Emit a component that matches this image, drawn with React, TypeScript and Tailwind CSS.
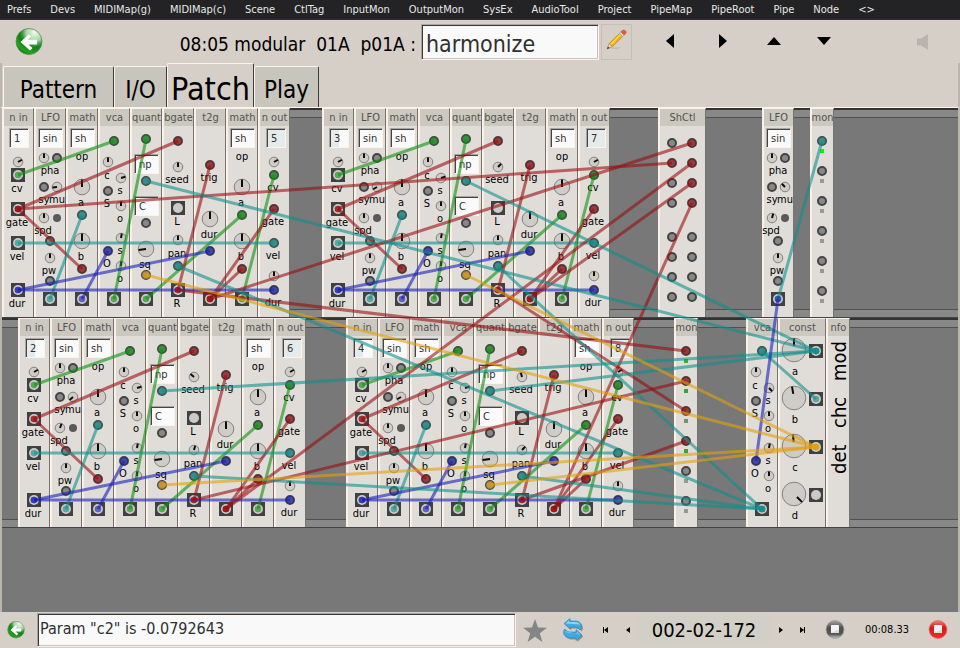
import { Fragment } from "react";

type Tint = "none" | "half" | "full";

type Part = {
  kind: "knob" | "port" | "jack" | "dot" | "led" | "field";
  x: number;
  y: number;
  size?: number;
  angle?: number;
  value?: string;
  tint?: Tint;
  color?: string;
  label?: string;
  lx?: number;
  ly?: number;
};

type ModuleData = { title: string; x: number; width: number; parts: Part[] };

const ROW = 210;
const MENUS = [
  "Prefs", "Devs", "MIDIMap(g)", "MIDIMap(c)", "Scene", "CtlTag", "InputMon", "OutputMon",
  "SysEx", "AudioTool", "Project", "PipeMap", "PipeRoot", "Pipe", "Node", "<>",
];

const knob = (x: number, y: number, size: number, angle = 0, label?: string, lx = x, ly = y + 13): Part => ({
  kind: "knob", x, y, size, angle, label, lx, ly,
});
const port = (x: number, y: number, label?: string, lx = x, ly = y + 12): Part => ({ kind: "port", x, y, label, lx, ly });
const jack = (x: number, y: number, label?: string, lx = x, ly = y + 13): Part => ({ kind: "jack", x, y, label, lx, ly });
const field = (x: number, y: number, size: number, value: string, tint: Tint = "none", label?: string, lx = 16, ly = 48): Part => ({
  kind: "field", x, y, size, value, tint, label, lx, ly,
});

const noteIn = (x: number, value: string, tint: Tint): ModuleData => ({
  title: "n in", x, width: 32,
  parts: [
    field(7, 20, 20, value, tint),
    knob(16, 54, 10, 60),
    jack(16, 67, "cv", 15, 80),
    jack(16, 101, "gate", 15, 114),
    jack(16, 135, "vel", 15, 148),
    jack(16, 182, "dur", 15, 195),
  ],
});
const noteOut = (x: number, value: string): ModuleData => ({
  title: "n out", x, width: 32,
  parts: [
    field(8, 20, 20, value, "full"),
    knob(16, 54, 10, 60),
    port(16, 67, "cv", 15, 79),
    port(16, 101, "gate", 15, 113),
    port(16, 135, "vel", 15, 147),
    knob(16, 168, 10),
    port(16, 182, "dur", 15, 194),
  ],
});
const lfo = (x: number, mu: number, spd: number): ModuleData => ({
  title: "LFO", x, width: 32,
  parts: [
    field(4, 20, 25, "sin"),
    knob(10, 50, 10, 0, "pha", 16, 62),
    port(23, 50),
    port(10, 79, "sy", 10, 91),
    knob(23, 79, 10, mu, "mu", 23, 91),
    knob(10, 110, 10, spd, "spd", 9, 122),
    { kind: "dot", x: 23, y: 110 },
    port(16, 133),
    knob(16, 150, 10, 0, "pw", 15, 162),
    port(16, 173),
    jack(16, 191),
  ],
});
const math = (x: number): ModuleData => ({
  title: "math", x, width: 32,
  parts: [
    field(4, 20, 25, "sh", "none", "op", 16, 48),
    knob(16, 79, 16, 0, "a", 15, 94),
    port(16, 107),
    knob(16, 133, 16, 0, "b", 15, 148),
    port(16, 161),
    jack(16, 191),
  ],
});
const vca = (x: number, c: number): ModuleData => ({
  title: "vca", x, width: 32,
  parts: [
    port(16, 33),
    knob(10, 54, 10, 0, "c", 9, 67),
    knob(23, 70, 10, c, "s", 22, 82),
    port(10, 83, "S", 9, 95),
    knob(23, 98, 10, 0, "o", 22, 110),
    knob(23, 130, 10, 10, "s", 22, 142),
    port(10, 143, "O", 9, 155),
    knob(23, 158, 10, 0, "o", 22, 170),
    jack(16, 191),
  ],
});
const quant = (x: number): ModuleData => ({
  title: "quant", x, width: 32,
  parts: [
    port(16, 31),
    field(4, 46, 25, "np"),
    port(16, 73),
    field(4, 88, 25, "C"),
    port(16, 115),
    knob(16, 141, 16, -98, "sq", 15, 156),
    port(16, 167),
    jack(16, 191),
  ],
});
const bgate = (x: number, seed: number, pan: number): ModuleData => ({
  title: "bgate", x, width: 32,
  parts: [
    port(16, 33),
    knob(16, 59, 10, seed, "seed", 15, 71),
    jack(16, 100, "L", 15, 113),
    knob(16, 132, 10, pan, "pan", 15, 145),
    port(16, 158),
    jack(16, 182, "R", 15, 195),
  ],
});
const t2g = (x: number): ModuleData => ({
  title: "t2g", x, width: 32,
  parts: [port(16, 57, "trig", 15, 69), knob(16, 111, 16, 0, "dur", 15, 126), port(16, 143), jack(16, 191)],
});
const monitor = (x: number, leds: string[]): ModuleData => ({
  title: "mon", x, width: 24,
  parts: leds.flatMap((color, i): Part[] => [
    port(12, 33 + i * 30),
    { kind: "led", x: 12, y: 43 + i * 30, color },
  ]),
});
const voice = (x: number, input: string, tint: Tint, output: string, mu: number, spd: number, seed: number, pan: number) => [
  noteIn(x, input, tint),
  lfo(x + 32, mu, spd),
  math(x + 64),
  vca(x + 96, 75),
  quant(x + 128),
  bgate(x + 160, seed, pan),
  t2g(x + 192),
  math(x + 224),
  noteOut(x + 256, output),
];

const OFF = "#999896";
const RACKS: ModuleData[][] = [
  [
    ...voice(0, "1", "none", "5", -95, 0, 0, 0),
    ...voice(320, "3", "half", "7", -120, 0, 45, 0),
    {
      title: "ShCtl", x: 656, width: 48,
      parts: [35, 55, 75, 95, 129, 149, 169, 189].flatMap((y) => [port(14, y), port(34, y)]),
    },
    lfo(760, -45, 15),
    monitor(808, ["#00f800", OFF, OFF, OFF, OFF, OFF]),
  ],
  [
    ...voice(16, "2", "half", "6", -130, 20, -50, 15),
    ...voice(344, "4", "half", "8", -120, 0, -15, 45),
    monitor(672, ["#22c022", "#3aa03a", "#6e956e", "#3aa53a", OFF, OFF]),
    vca(744, 135),
    {
      title: "const", x: 776, width: 48,
      parts: [
        knob(16, 32, 24, 0, "a", 17, 53),
        knob(16, 80, 24, -10, "b", 17, 101),
        knob(16, 128, 24, -5, "c", 17, 149),
        knob(16, 176, 24, 135, "d", 17, 197),
        jack(38, 33), jack(38, 81), jack(38, 129), jack(38, 177),
      ],
    },
    { title: "nfo", x: 824, width: 24, parts: [] },
  ],
];

type Cable = [color: string, x1: number, y1: number, x2: number, y2: number];
const RED = "#990f12";
const GREEN = "#109010";
const TEAL = "#108f8c";
const BLUE = "#1a20b8";
const GOLD = "#e3a00c";

const voiceCables = (x: number, y: number): Cable[] =>
  ([
    [GREEN, 16, 67, 112, 33],
    [GREEN, 112, 191, 144, 31],
    [GREEN, 144, 191, 240, 107],
    [GREEN, 240, 191, 272, 67],
    [RED, 16, 101, 176, 33],
    [RED, 16, 101, 80, 161],
    [RED, 176, 182, 208, 57],
    [RED, 208, 191, 272, 101],
    [RED, 208, 191, 240, 161],
    [TEAL, 16, 135, 272, 135],
    [TEAL, 48, 191, 80, 107],
    [BLUE, 16, 182, 272, 182],
    [BLUE, 16, 182, 208, 143],
    [BLUE, 80, 191, 106, 143],
  ] as Cable[]).map(([c, a, b, d, e]) => [c, a + x, b + y, d + x, e + y]);

const CABLES: Cable[] = [
  ...voiceCables(0, 0),
  ...voiceCables(320, 0),
  ...voiceCables(16, ROW),
  ...voiceCables(344, ROW),
  [RED, 16, 101, 670, 55],
  [RED, 208, 191, 690, 35],
  [RED, 176, 182, 684, 243],
  [RED, 496, 182, 684, 303],
  [RED, 528, 191, 690, 75],
  [RED, 224, 401, 690, 55],
  [RED, 552, 401, 690, 95],
  [RED, 192, 392, 684, 273],
  [RED, 520, 392, 684, 333],
  [TEAL, 814, 243, 144, 73],
  [TEAL, 814, 243, 464, 73],
  [TEAL, 814, 243, 160, 283],
  [TEAL, 814, 243, 488, 283],
  [TEAL, 760, 401, 176, 158],
  [TEAL, 760, 401, 496, 158],
  [TEAL, 760, 401, 192, 368],
  [TEAL, 760, 401, 520, 368],
  [TEAL, 814, 291, 760, 243],
  [TEAL, 776, 191, 820, 33],
  [BLUE, 776, 191, 754, 353],
  [GOLD, 814, 339, 144, 167],
  [GOLD, 814, 339, 464, 167],
  [GOLD, 814, 339, 160, 377],
  [GOLD, 814, 339, 488, 377],
];

function Knob({ part, id, name }: { part: Part; id: string; name: string }) {
  const size = part.size ?? 10;
  const r = size / 2;
  return (
    <span className="absolute" style={{ left: part.x - r, top: part.y - r, width: size, height: size }}>
      <svg viewBox={`0 0 ${size} ${size}`} className="block size-full overflow-visible">
        <circle cx={r} cy={r} r={r - 0.2} fill="#cfccc7" stroke="#85827e" />
        <line
          x1={r} y1={size > 20 ? r * 0.65 : r} x2={r} y2={0.5}
          stroke="#0c0c0c" strokeWidth="2" transform={`rotate(${part.angle ?? 0} ${r} ${r})`}
        />
      </svg>
      <input id={id} aria-label={name} type="range" min={-180} max={180} defaultValue={part.angle} className="absolute inset-0 size-full opacity-0" />
    </span>
  );
}

const TINTS: Record<Tint, string> = {
  none: "bg-[#fafafa]",
  half: "bg-[linear-gradient(90deg,#e4ebea_50%,#fafafa_50%)]",
  full: "bg-[#e4ebea]",
};

function Control({ part, id, name }: { part: Part; id: string; name: string }) {
  switch (part.kind) {
    case "knob":
      return <Knob part={part} id={id} name={name} />;
    case "port":
      return (
        <button
          id={id} aria-label={name}
          className="absolute size-[10px] rounded-full border-2 border-[#444444] bg-[#888888]"
          style={{ left: part.x - 5, top: part.y - 5 }}
        />
      );
    case "jack":
      return (
        <button
          id={id} aria-label={name}
          className="absolute flex size-[14px] items-center justify-center bg-[#404040]"
          style={{ left: part.x - 7, top: part.y - 7 }}
        >
          <span className="size-[10px] rounded-full bg-[#cbcac8]" />
        </button>
      );
    case "field":
      return (
        <input
          id={id} aria-label={name} defaultValue={part.value}
          className={`absolute h-5 border border-t-[#aaa5a0] border-r-[#fcf3ec] border-b-[#fcf3ec] border-l-[#aaa5a0] pl-1 text-[11px] leading-4 text-[#303030] shadow-[inset_1px_1px_0_#444] ${TINTS[part.tint ?? "none"]}`}
          style={{ left: part.x, top: part.y, width: part.size }}
        />
      );
    case "dot":
      return <span className="absolute size-2 rounded-full bg-[#5a5a5a]" style={{ left: part.x - 4, top: part.y - 4 }} />;
    default:
      return <span className="absolute size-1" style={{ left: part.x - 2, top: part.y - 2, background: part.color }} />;
  }
}

function Module({ data, rack }: { data: ModuleData; rack: number }) {
  return (
    <section
      className="absolute inset-y-0 mb-px border-t border-r border-l-2 border-t-[#faf0e8] border-r-[#77736f] border-l-[#faf0e8] bg-[#e0ddd8]"
      style={{ left: data.x, width: data.width }}
    >
      <h3 className="flex h-[17px] justify-center bg-[#cbc8c0] text-[11px] leading-[18px] whitespace-nowrap text-[#55524e]">
        {data.title}
      </h3>
      <div className="absolute -top-px -left-0.5">
        {data.parts.map((part, i) => {
          const id = `r${rack}-m${data.x}-p${i}`;
          return (
            <Fragment key={id}>
              <Control part={part} id={id} name={part.label ?? `${data.title} ${i + 1}`} />
              {part.label && (
                <label
                  htmlFor={id}
                  className="absolute h-4 w-10 text-center text-[11px] leading-4 text-black"
                  style={{ left: (part.lx ?? 0) - 20, top: (part.ly ?? 0) - 7 }}
                >
                  {part.label}
                </label>
              )}
            </Fragment>
          );
        })}
      </div>
      {data.title === "nfo" && (
        <p className="mt-[5px] flex h-[133px] w-full rotate-180 items-center justify-between text-[20px] leading-5 text-black [writing-mode:vertical-rl]">
          <span>det</span>
          <span>chc</span>
          <span>mod</span>
        </p>
      )}
    </section>
  );
}

function Cables() {
  return (
    <svg className="pointer-events-none absolute inset-0 size-full">
      {CABLES.map(([color, x1, y1, x2, y2], i) => (
        <g key={i} fill={color} stroke="none">
          <line x1={x1} y1={y1} x2={x2} y2={y2} stroke={color} strokeWidth="3" opacity="0.6" />
          <circle cx={x1} cy={y1} r="3.3" opacity="0.6" />
          <circle cx={x2} cy={y2} r="4" opacity="0.6" />
        </g>
      ))}
    </svg>
  );
}

function BackIcon({ className }: { className: string }) {
  return (
    <svg viewBox="0 0 28 28" className={className}>
      <defs>
        <radialGradient id="leaf" cx="0.72" cy="0.15" r="0.95">
          <stop offset="0" stopColor="#f0faee" />
          <stop offset="0.35" stopColor="#a5d3a2" />
          <stop offset="0.5" stopColor="#3f9a40" />
          <stop offset="0.62" stopColor="#167d1a" />
          <stop offset="0.85" stopColor="#1da81d" />
          <stop offset="1" stopColor="#0c5a10" />
        </radialGradient>
      </defs>
      <circle cx="14" cy="13.5" r="13" fill="url(#leaf)" stroke="#5a8a5c" strokeWidth="0.8" />
      <path d="M5.500 14 L13.500 6.500 L16 8.500 L12.800 11.800 L22 11.800 L22 16.500 L13.500 16.500 L17.500 20 L15 22.500 Z" fill="#fff" />
    </svg>
  );
}

function SquareIcon({ red }: { red?: boolean }) {
  return (
    <svg viewBox="0 0 20 20" className="size-5">
      <defs>
        <linearGradient id="ember" x1="0" y1="0" x2="0" y2="1">
          <stop offset="0" stopColor="#f08078" />
          <stop offset="0.4" stopColor="#d81818" />
          <stop offset="1" stopColor="#f03028" />
        </linearGradient>
        <linearGradient id="steel" x1="0" y1="0" x2="0" y2="1">
          <stop offset="0" stopColor="#a8a8a8" />
          <stop offset="0.4" stopColor="#505050" />
          <stop offset="0.75" stopColor="#555" />
          <stop offset="1" stopColor="#c8c8c8" />
        </linearGradient>
      </defs>
      <circle cx="10" cy="9.5" r="9" fill={red ? "url(#ember)" : "url(#steel)"} stroke={red ? "#d87070" : "#a0a0a0"} strokeWidth="0.8" />
      <rect x="6" y="5" width="8" height="8" rx="0.5" fill="#f4f4f4" />
      <path d="M6 13 L14 9 V13 Z" fill="#dcdcdc" />
    </svg>
  );
}

function Tri({ d, box, className, name }: { d: string; box: string; className: string; name: string }) {
  return (
    <button aria-label={name} className={`flex h-full items-center justify-center ${className}`}>
      <svg viewBox={`0 0 ${box}`} width={box.split(" ")[0]} height={box.split(" ")[1]}>
        <path d={d} fill="#000" />
      </svg>
    </button>
  );
}

const TABS = [
  { name: "Pattern", style: "mt-[3px] w-[111px] bg-[#c8c5bc] text-[24px]" },
  { name: "I/O", style: "mt-[3px] w-[53px] bg-[#c8c5bc] text-[24px]" },
  { name: "Patch", style: "w-[87px] bg-[#d5cfc8] text-[32px]" },
  { name: "Play", style: "mt-[3px] w-[65px] bg-[#c8c5bc] text-[24px]" },
];

const INSET = "border border-t-[#aaa5a0] border-r-[#fcf3ec] border-b-[#fcf3ec] border-l-[#aaa5a0] bg-[#f9f9f9] text-[#303030] shadow-[inset_1px_1px_0_#383838,inset_-1px_-1px_0_#c8c3bc]";

export default function App() {
  return (
    <div className="flex h-screen flex-col overflow-hidden bg-[#d5cfc8] font-['DejaVu_Sans_Condensed','DejaVu_Sans',sans-serif] text-black">
      <nav className="flex h-5 shrink-0 items-center gap-[19px] border-b border-[#3a3034] bg-[#232325] px-[7px] pt-[2px] text-[11px] whitespace-nowrap text-[#e8e8e8]">
        {MENUS.map((m) => (
          <button key={m}>{m}</button>
        ))}
      </nav>

      <header className="flex h-[43px] shrink-0 items-center">
        <button aria-label="Back" className="ml-[15px]">
          <BackIcon className="size-7" />
        </button>
        <label htmlFor="name" className="w-[373px] pt-1 text-right text-[19px] leading-6 whitespace-pre">
          08:05 modular  01A  p01A :
        </label>
        <input id="name" defaultValue="harmonize" className={`ml-[5px] h-9 w-[178px] px-1 pt-1 text-[23px] ${INSET}`} />
        <button aria-label="Edit" className="ml-[2px] flex h-9 w-[31px] items-center justify-center border border-[#c5bfb8]">
          <svg viewBox="0 0 24 24" className="mb-1 size-6">
            <path d="M3 20 L12 21.5 L16 19 Z" fill="#b8b2aa" opacity="0.6" />
            <path d="M2 21 L4.2 15.600 L7.400 18.7 Z" fill="#ecd8b0" stroke="#8a6a4a" strokeWidth="0.5" />
            <path d="M2 21 L3 18.5 L4.6 20 Z" fill="#333" />
            <path d="M4.2 15.600 L14.5 5.300 L17.700 8.4 L7.400 18.7 Z" fill="#f5a81c" stroke="#a8701c" strokeWidth="0.5" />
            <path d="M5.3 15.9 L15 6.200 L16 7.200 L6.3 16.9 Z" fill="#ffe24a" />
            <path d="M14.5 5.300 L16 3.800 L19.200 7 L17.700 8.4 Z" fill="#d8dce4" stroke="#8a8e96" strokeWidth="0.5" />
            <path d="M16 3.800 C18 1.6 19.5 1.800 20.6 3 C21.8 4.3 21.300 5.2 19.200 7 Z" fill="#ec5a30" stroke="#c03c20" strokeWidth="0.5" />
          </svg>
        </button>
        <div className="ml-[11px] flex h-9 -translate-y-px">
          <Tri name="Previous" className="w-[54px]" box="8 14" d="M8 0 V14 L0 7 Z" />
          <Tri name="Next" className="w-[52px]" box="8 14" d="M0 0 V14 L8 7 Z" />
          <Tri name="Up" className="w-[50px]" box="14 8" d="M0 8 H14 L7 0 Z" />
          <Tri name="Down" className="w-[50px]" box="14 8" d="M0 0 H14 L7 8 Z" />
        </div>
        <button aria-label="Sound" className="mr-8 ml-auto">
          <svg viewBox="0 0 11 16" className="h-4 w-[11px]">
            <path d="M0 4.5 H4 L11 0 V16 L4 11.5 H0 Z" fill="#b9b4ae" />
          </svg>
        </button>
      </header>

      <div role="tablist" className="flex h-11 shrink-0 border-x-2 border-[#bab5ae] pl-px">
        {TABS.map((t) => (
          <button
            key={t.name} role="tab" aria-selected={t.name === "Patch"}
            className={`rounded-t-[2px] border-t border-r border-l border-t-[#fcf3ec] border-r-[#3c3c3c] border-l-[#fcf3ec] pt-[6px] leading-8 ${t.style}`}
          >
            {t.name}
          </button>
        ))}
      </div>

      <main className="relative min-h-0 flex-1 overflow-hidden border-x-2 border-t border-x-[#bab5ae] border-t-[#fcf3ec] bg-[#787878]">
        {RACKS.map((modules, rack) => (
          <div key={rack} className="relative flex h-[210px] flex-col justify-between">
            <div className="h-[10px] border-t-2 border-b border-t-[#333] border-b-[#505050] bg-[#888]" />
            <div className="h-[9px] border-t border-b border-t-[#505050] border-b-[#444] bg-[#888]" />
            {modules.map((m) => (
              <Module key={m.x} data={m} rack={rack} />
            ))}
          </div>
        ))}
        <Cables />
      </main>

      <footer className="flex h-9 shrink-0 items-center">
        <button aria-label="Back" className="flex w-[37px] justify-center pr-[5px]">
          <BackIcon className="size-[18px]" />
        </button>
        <input aria-label="Status" defaultValue={'Param "c2" is -0.0792643'} className={`h-[34px] min-w-0 flex-1 px-[2px] pb-1 text-[16px] font-extralight ${INSET}`} />
        <button aria-label="Favourite" className="flex w-[38px] justify-center">
          <svg viewBox="0 0 24 23" className="h-[23px] w-6">
            <path d="M12 0 L15 8.5 L24 8.7 L16.8 14.2 L19.4 23 L12 17.8 L4.6 23 L7.2 14.2 L0 8.7 L9 8.5 Z" fill="#858585" />
          </svg>
        </button>
        <button aria-label="Loop" className="flex w-[38px] justify-center">
          <svg viewBox="0 0 22 24" className="h-6 w-[22px]">
            <g fill="#7a7672" opacity="0.7" transform="translate(1.4 1.6)">
              <path d="M2 5.500 L8 0.500 V3 H13 C17 3 19.500 5 19.500 8.500 C19.500 10 19 11 18 12 C16.500 9.800 14.500 9 12 9 H8 V11 Z" />
              <path d="M20 17 L14 22.500 V20 H9 C4.500 20 1.500 17.500 1.500 14.500 C1.500 13 2 12 3 11 C4.500 13.500 6.500 14 9 14 H14 V11.500 Z" />
            </g>
            <path d="M2 5.500 L8 0.500 V3 H13 C17 3 19.500 5 19.500 8.500 C19.500 10 19 11 18 12 C16.500 9.800 14.500 9 12 9 H8 V11 Z" fill="#3fa9e2" stroke="#2a7fb4" strokeWidth="0.6" />
            <path d="M20 17 L14 22.500 V20 H9 C4.500 20 1.500 17.500 1.500 14.500 C1.500 13 2 12 3 11 C4.500 13.500 6.500 14 9 14 H14 V11.500 Z" fill="#3fa9e2" stroke="#2a7fb4" strokeWidth="0.6" />
            <path d="M3.500 5.400 L7.300 2.200 V4 H13 C15.500 4 17.500 5 18 6.500 Z" fill="#8fd3f2" />
            <path d="M3 13 C4.500 15 6.500 15.200 9 15.200 H15 V13.500 L18.500 16.800 Z" fill="#74c4ee" />
          </svg>
        </button>
        <Tri name="First" className="w-[26px]" box="5 6" d="M0 0 H1 V6 H0 Z M5 0 V6 L1 3 Z" />
        <Tri name="Back one" className="w-5" box="4 6" d="M4 0 V6 L0 3 Z" />
        <output className="w-[132px] bg-[#d1cfc6] text-center text-[20px] leading-8">002-02-172</output>
        <Tri name="Forward one" className="w-[22px]" box="4 6" d="M0 0 V6 L4 3 Z" />
        <Tri name="Last" className="w-5" box="5 6" d="M4 0 H5 V6 H4 Z M0 0 V6 L4 3 Z" />
        <button aria-label="Stop" className="flex w-[46px] justify-center">
          <SquareIcon />
        </button>
        <output className="w-[58px] text-center text-[11px]">00:08.33</output>
        <button aria-label="Record" className="flex w-11 justify-center">
          <SquareIcon red />
        </button>
      </footer>
    </div>
  );
}
